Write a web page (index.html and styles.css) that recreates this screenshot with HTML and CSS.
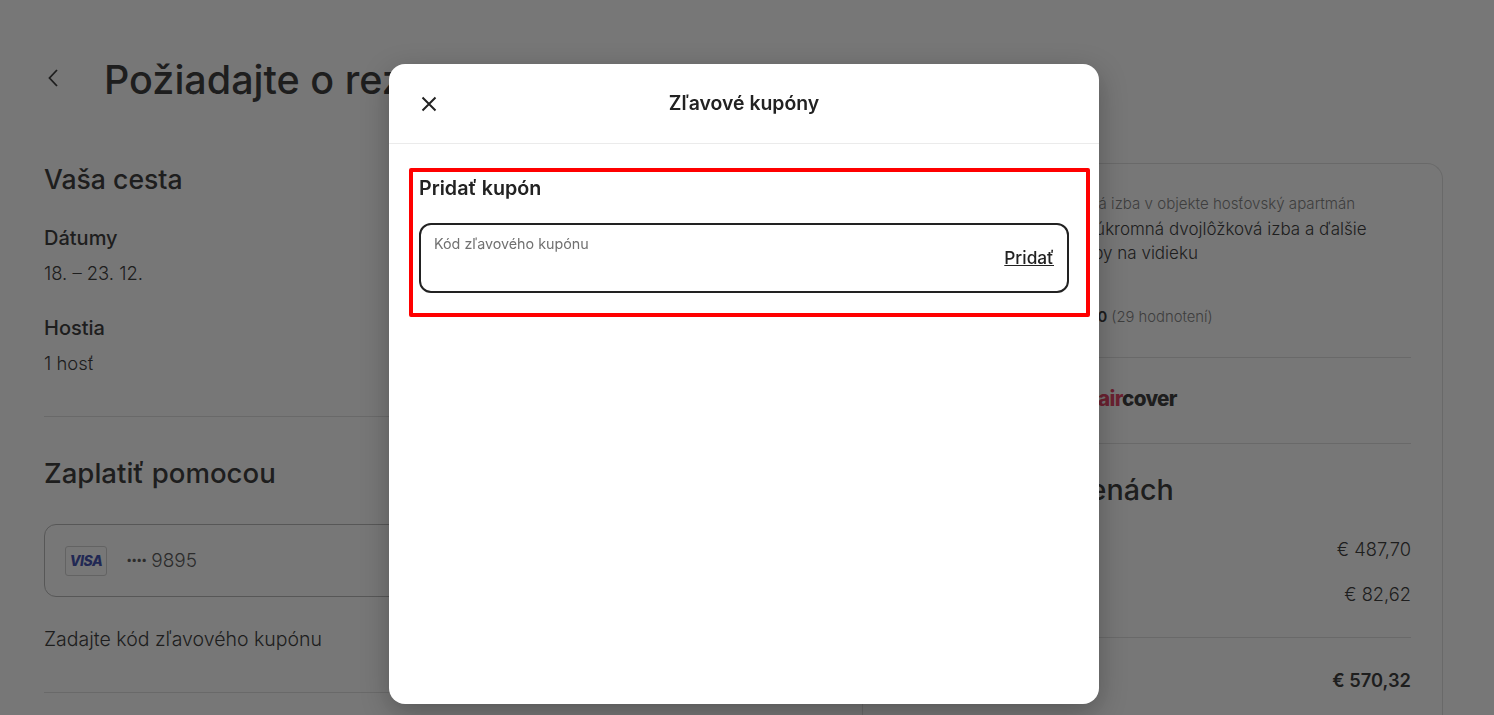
FILE: index.html
```html
<!DOCTYPE html>
<html lang="sk">
<head>
<meta charset="utf-8">
<title>Požiadajte o rezerváciu</title>
<link rel="stylesheet" href="styles.css">
</head>
<body>
<div class="page">
  <header class="top">
    <svg class="back" viewBox="0 0 12 20" aria-hidden="true"><path d="M10 2 2.5 10 10 18" fill="none" stroke="currentColor" stroke-width="1.8"/></svg>
    <h1>Požiadajte o rezerváciu</h1>
  </header>
  <div class="columns">
    <main class="left">
      <h2 class="trip-title">Vaša cesta</h2>
      <div class="label l-dates">Dátumy</div>
      <div class="value">18. – 23. 12.</div>
      <div class="label l-guests">Hostia</div>
      <div class="value">1 hosť</div>
      <hr class="rule r-a">
      <h2 class="pay-title">Zaplatiť pomocou</h2>
      <div class="card-select">
        <span class="visa">VISA</span>
        <span class="card-no"><span class="dots">····</span> 9895</span>
      </div>
      <div class="coupon-link">Zadajte kód zľavového kupónu</div>
      <hr class="rule r-b">
    </main>
    <aside class="summary">
      <div class="listing">
        <div class="thumb"></div>
        <div class="listing-text">
          <div class="kind">Súkromná izba v objekte hosťovský apartmán</div>
          <div class="name">Krásna súkromná dvojlôžková izba a ďalšie<span class="name-end">izby na vidieku</span></div>
          <div class="rating"><b>4,90</b> (29 hodnotení)</div>
        </div>
      </div>
      <hr class="rule s-a">
      <div class="aircover"><span class="air">air</span>cover</div>
      <hr class="rule s-b">
      <h2 class="price-title">Informácie o cenách</h2>
      <div class="price p-one"><span>€ 97,54 × 5 nocí</span><span>€ 487,70</span></div>
      <div class="price p-two"><span>Poplatok za služby</span><span>€ 82,62</span></div>
      <hr class="rule s-c">
      <div class="price total"><span>Spolu (EUR)</span><span>€ 570,32</span></div>
    </aside>
  </div>
</div>
<div class="overlay">
  <section class="modal">
    <header class="modal-head">
      <svg class="close" viewBox="0 0 16 16" aria-hidden="true"><path d="M1.5 1.5 14.5 14.5M14.5 1.5 1.5 14.5" fill="none" stroke="currentColor" stroke-width="2"/></svg>
      <div class="modal-title">Zľavové kupóny</div>
    </header>
    <div class="highlight">
      <h3>Pridať kupón</h3>
      <div class="field">
        <span class="placeholder">Kód zľavového kupónu</span>
        <a class="add">Pridať</a>
      </div>
    </div>
  </section>
</div>
</body>
</html>
```

FILE: styles.css
```css
* { box-sizing: border-box; }
html, body { margin: 0; height: 100%; overflow: hidden; }
body {
  background: #fff;
  color: #222;
  font-family: Inter, "Liberation Sans", sans-serif;
}
h1, h2, h3 { margin: 0; }

.page { height: 715px; overflow: hidden; padding: 0 51px 0 44px; }
.top { display: flex; align-items: center; height: 64px; margin-top: 48px; }
.back { width: 12px; height: 20px; margin-left: 3px; margin-right: 45px; margin-top: -4px; }
h1 { font-size: 39.5px; font-weight: 500; line-height: 40px; white-space: nowrap; }

.columns { display: flex; justify-content: space-between; align-items: flex-start; }
.left { width: 738px; padding-top: 51px; }
.trip-title { font-size: 26.6px; font-weight: 500; line-height: 32px; }
.pay-title { font-size: 27.6px; font-weight: 500; line-height: 32px; margin-top: 40px; }
.label { font-size: 20px; font-weight: 500; line-height: 24px; }
.l-dates { margin-top: 31px; }
.l-guests { margin-top: 31px; }
.value { font-size: 18.4px; font-weight: 300; line-height: 24px; margin-top: 11px; }
.rule { border: 0; border-top: 1px solid #ddd; margin: 0; }
.r-a { margin-top: 41px; }
.card-select {
  display: flex; align-items: center; gap: 19px;
  height: 73px; margin-top: 35px; padding-left: 20px;
  border: 1px solid #b0b0b0; border-radius: 12px;
}
.visa {
  width: 42px; height: 30px; display: flex; align-items: center; justify-content: center;
  border: 1px solid #ccc; border-radius: 3px; background: #fff;
  color: #2a3ba8; font-size: 14px; font-weight: 800; font-style: italic; letter-spacing: -.5px;
}
.card-no { font-size: 19px; font-weight: 300; color: #444; }
.dots { font-weight: 700; letter-spacing: -1.35px; }
.coupon-link { margin-top: 30px; font-size: 19.5px; font-weight: 300; line-height: 24px; }
.r-b { margin-top: 41px; }

.summary {
  width: 581px; height: 552px; margin-top: 51px; padding: 30px 31px 0;
  border: 1px solid #ddd; border-bottom: 0; border-radius: 16px 16px 0 0;
}
.listing { display: flex; }
.thumb { width: 100px; height: 120px; margin-right: 33px; flex: none; background: #ccc; border-radius: 8px; }
.listing-text { flex: 1; min-width: 0; }
.kind { font-size: 15.1px; font-weight: 300; line-height: 20px; color: #717171; white-space: nowrap; padding-left: 9px; }
.name { font-size: 17px; font-weight: 300; line-height: 24px; margin-top: 3px; white-space: nowrap; }
.name-end { display: block; padding-left: 53px; }
.rating { font-size: 14.8px; font-weight: 300; line-height: 20px; color: #717171; margin-top: 42px; padding-left: 47px; }
.rating b { color: #222; font-weight: 600; }
.s-a { margin-top: 30px; }
.aircover { font-size: 20.7px; font-weight: 800; line-height: 28px; letter-spacing: -.7px; margin-top: 27px; padding-left: 204px; }
.air { color: #e0294f; }
.s-b { margin-top: 30px; }
.price-title { font-size: 28.7px; font-weight: 500; line-height: 32px; margin-top: 30px; }
.price { display: flex; justify-content: space-between; font-size: 18.3px; font-weight: 300; line-height: 24px; }
.p-one { margin-top: 31px; }
.p-two { margin-top: 21px; }
.s-c { margin-top: 31px; }
.total { font-weight: 600; margin-top: 30px; }

.overlay {
  position: fixed; inset: 0;
  background: rgba(28, 28, 28, .6);
  display: flex; justify-content: center; align-items: flex-start;
  padding: 64px 6px 0 0;
}
.modal {
  width: 710px; height: 640px;
  background: #fff; border-radius: 16px;
  box-shadow: 0 8px 28px rgba(0, 0, 0, .28);
}
.modal-head {
  display: flex; align-items: center; justify-content: center;
  position: relative;
  height: 80px; border-bottom: 1px solid #ebebeb;
}
.close { position: absolute; left: 32px; top: 32px; width: 16px; height: 16px; }
.modal-title { font-size: 19.4px; font-weight: 600; line-height: 24px; margin-top: -2px; }
.highlight {
  margin: 24px 9px 0 20px; padding: 4px 17px 0 6px; height: 149px;
  border: 4px solid #f00; border-radius: 2px;
}
.highlight h3 { font-size: 19.7px; font-weight: 600; line-height: 24px; }
.field {
  height: 70px; margin-top: 23px;
  border: 2px solid #222; border-radius: 12px;
  display: flex; justify-content: space-between; align-items: flex-start;
  padding: 0 13px;
}
.placeholder { font-size: 14.3px; font-weight: 400; color: #717171; line-height: 18px; margin-top: 10px; }
.add { font-size: 17.3px; font-weight: 500; line-height: 22px; margin-top: 22px; text-decoration: underline; }
```
